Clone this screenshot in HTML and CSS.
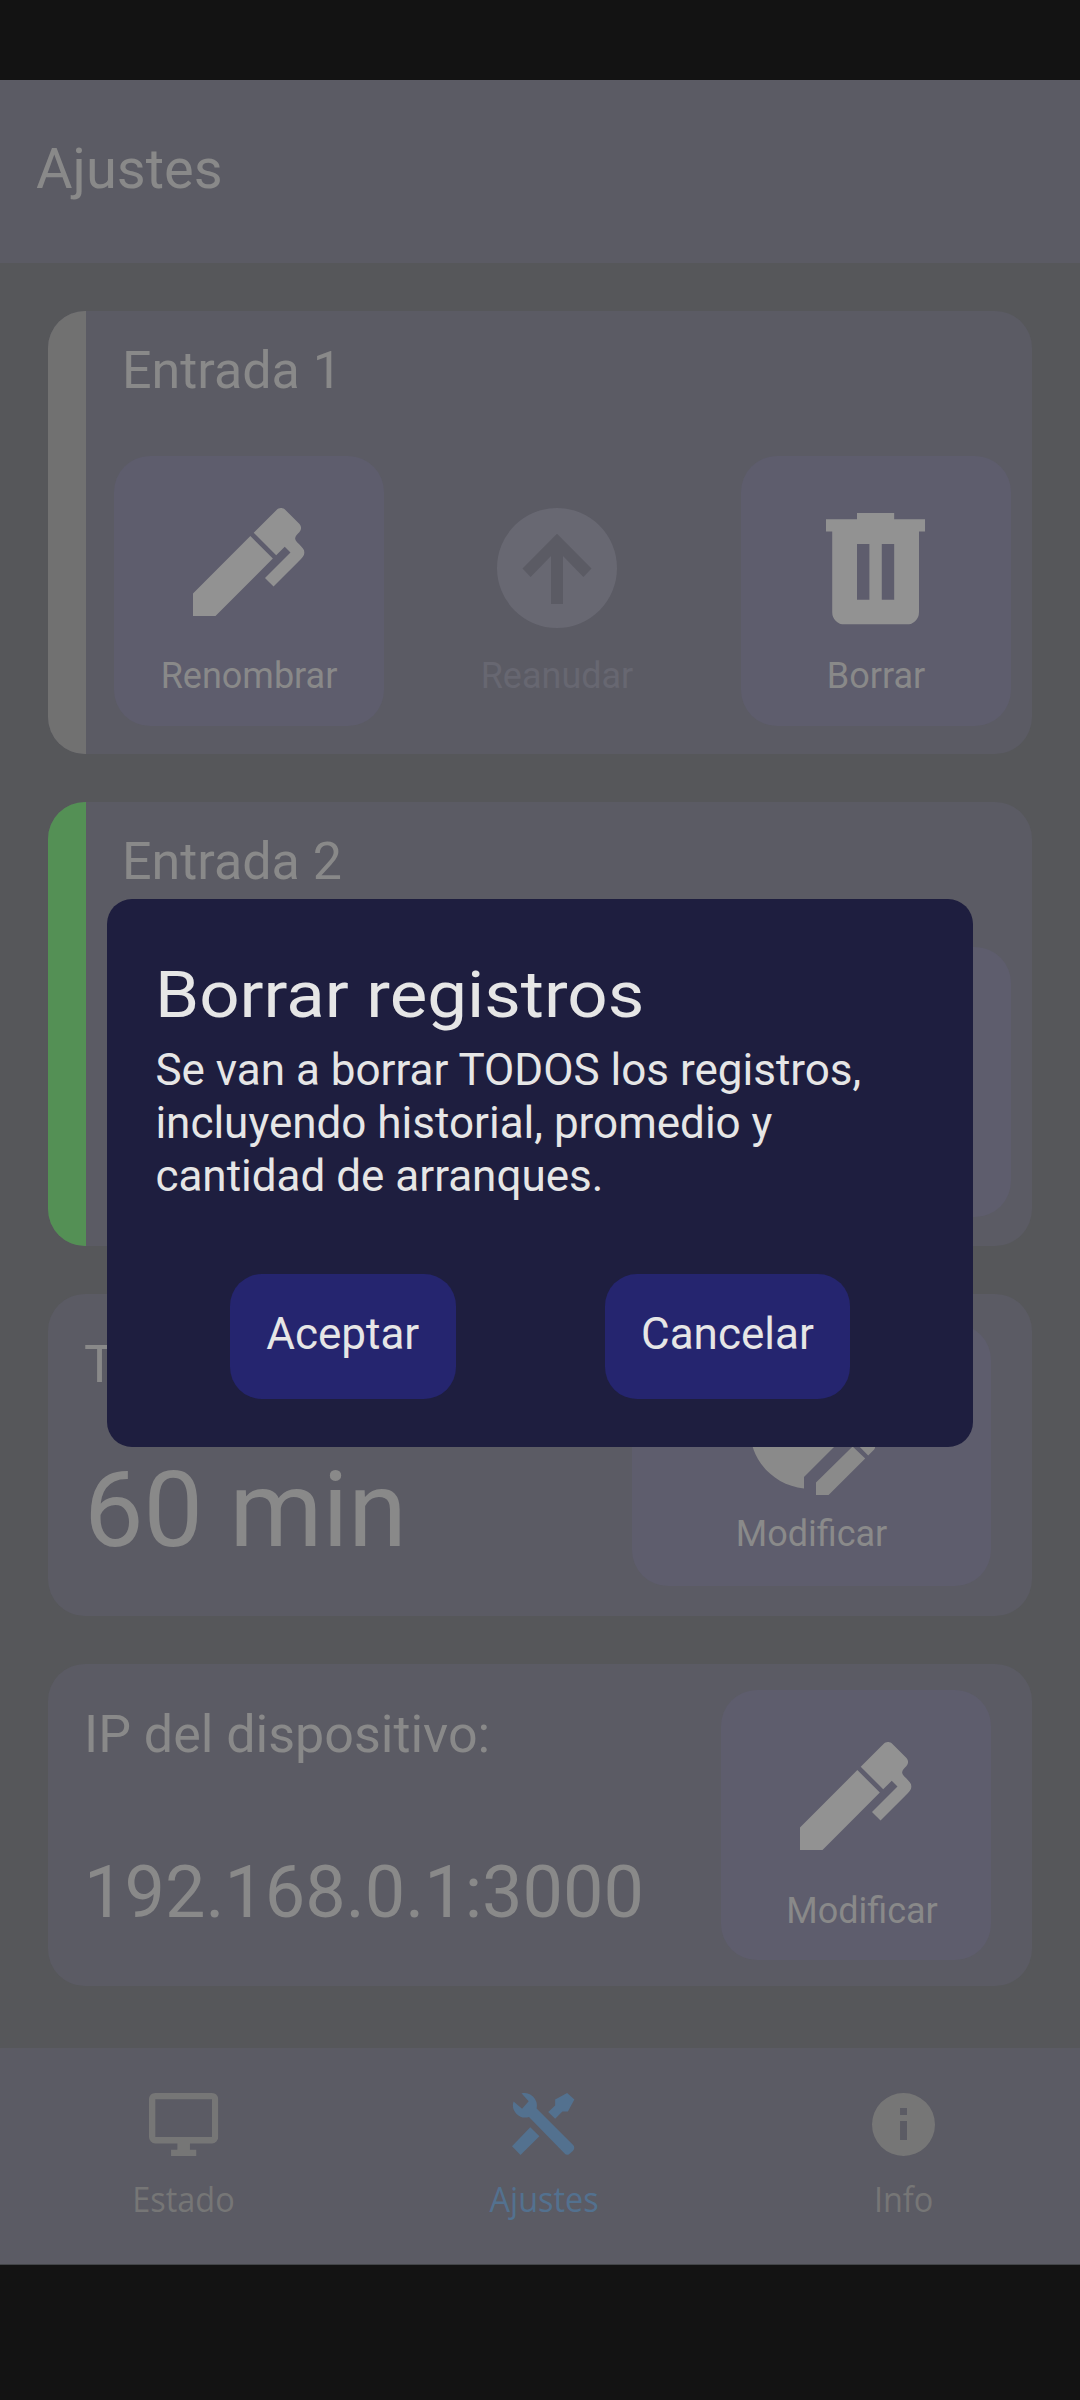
FILE: index.html
```html
<!DOCTYPE html>
<html lang="es">
<head>
<meta charset="utf-8">
<title>Ajustes</title>
<link rel="stylesheet" href="styles.css">
</head>
<body>
<svg class="defs" width="0" height="0">
  <symbol id="pen" viewBox="3 3 18.6 18"><path d="M20.71,7.04C20.37,7.38 20.04,7.71 20.03,8.04C20,8.36 20.34,8.69 20.66,9C21.14,9.5 21.61,9.95 21.59,10.44C21.57,10.93 21.06,11.44 20.55,11.94L16.42,16.08L15,14.66L19.25,10.42L18.29,9.46L16.87,10.87L13.12,7.12L16.96,3.29C17.35,2.9 18,2.9 18.37,3.29L20.71,5.63C21.1,6 21.1,6.65 20.71,7.04M3,17.25L12.56,7.68L16.31,11.43L6.75,21H3V17.25Z"/></symbol>
  <symbol id="arrow-up" viewBox="2 2 20 20"><path d="M13,18V10L16.4,13.5L17.75,12.08L12,6.3L6.25,12.08L7.6,13.5L11,10V18H13M12,2A10,10 0 0,1 22,12A10,10 0 0,1 12,22A10,10 0 0,1 2,12A10,10 0 0,1 12,2Z"/></symbol>
  <symbol id="trash" viewBox="4 3 16 18"><path d="M9,3V4H4V6H5V19A2,2 0 0,0 7,21H17A2,2 0 0,0 19,19V6H20V4H15V3H9M9,8H11V17H9V8M13,8H15V17H13V8Z"/></symbol>
  <symbol id="clock-edit" viewBox="0 0 24 24"><path d="M21 13.1C20.9 13.1 20.7 13.2 20.6 13.3L19.6 14.3L21.7 16.4L22.7 15.4C22.9 15.2 22.9 14.8 22.7 14.6L21.4 13.3C21.3 13.2 21.2 13.1 21 13.1M19.1 14.9L13 20.9V23H15.1L21.2 16.9L19.1 14.9M12.5 7V12.2L16.5 14.5L15.5 15.5L11 13V7H12.5M11 21.9C5.9 21.4 2 17.2 2 12C2 6.5 6.5 2 12 2C17.3 2 21.6 6.1 22 11.3C21.7 11.2 21.4 11.1 21 11.1C20.2 11.1 19.6 11.4 19.2 11.8L11 20V21.9Z"/></symbol>
  <symbol id="monitor" viewBox="1 2 22 20"><path d="M21,16H3V4H21M21,2H3C1.89,2 1,2.89 1,4V16A2,2 0 0,0 3,18H10V20H8V22H16V20H14V18H21A2,2 0 0,0 23,16V4C23,2.89 22.1,2 21,2Z"/></symbol>
  <symbol id="tools" viewBox="2 2 20 20"><path d="M21.3 20.4L20.4 21.2A1.15 1.15 0 0 1 18.7 21.2L7.4 9.6A3.9 3.9 0 0 1 2.5 4.7L5.2 7L7.3 4.6L5 2.1A4 4 0 0 1 9.8 6.9L21.4 18.5A1.3 1.3 0 0 1 21.3 20.4M2 18.9L4.7 21.7L10.7 15.7L7.8 12.9M19.5 2L15.7 4.1V6L13.5 8L15.7 10.2L18 7.9H19.75L21.8 4.1Z"/></symbol>
  <symbol id="info" viewBox="2 2 20 20"><path d="M13.1,9H10.9V6.8H13.1M13.1,16.9H10.9V10.9H13.1M12,2A10,10 0 0,0 2,12A10,10 0 0,0 12,22A10,10 0 0,0 22,12A10,10 0 0,0 12,2Z"/></symbol>
</svg>
<div class="screen">
  <div class="statusbar"></div>
  <header class="header"><h1>Ajustes</h1></header>
  <main class="content">
    <section class="card input-card">
      <div class="stripe"></div>
      <div class="input-body">
        <h2>Entrada 1</h2>
        <div class="actions">
          <div class="action"><div class="icon-box"><svg class="icon-pen"><use href="#pen"/></svg></div><span>Renombrar</span></div>
          <div class="action disabled"><div class="icon-box"><svg class="icon-arrow"><use href="#arrow-up"/></svg></div><span>Reanudar</span></div>
          <div class="action delete"><div class="icon-box"><svg class="icon-trash"><use href="#trash"/></svg></div><span>Borrar</span></div>
        </div>
      </div>
    </section>
    <section class="card input-card active">
      <div class="stripe"></div>
      <div class="input-body">
        <h2>Entrada 2</h2>
        <div class="actions">
          <div class="action"></div>
          <div class="action disabled"></div>
          <div class="action delete"></div>
        </div>
      </div>
    </section>
    <section class="card value-card">
      <div class="value-body">
        <h2>T</h2>
        <p class="minutes">60 min</p>
      </div>
      <div class="action wide"><svg class="icon-clock"><use href="#clock-edit"/></svg><span>Modificar</span></div>
    </section>
    <section class="card value-card">
      <div class="value-body">
        <h2>IP del dispositivo:</h2>
        <p class="address">192.168.0.1:3000</p>
      </div>
      <div class="action address-action"><div class="icon-box"><svg class="icon-pen"><use href="#pen"/></svg></div><span>Modificar</span></div>
    </section>
  </main>
  <nav class="tabs">
    <div class="tab"><svg class="icon-monitor"><use href="#monitor"/></svg><span>Estado</span></div>
    <div class="tab selected"><svg class="icon-tab"><use href="#tools"/></svg><span>Ajustes</span></div>
    <div class="tab"><svg class="icon-tab"><use href="#info"/></svg><span>Info</span></div>
  </nav>
  <div class="navbar"></div>
  <div class="dialog">
    <h3>Borrar registros</h3>
    <p>Se van a borrar TODOS los registros, incluyendo historial, promedio y cantidad de arranques.</p>
    <div class="dialog-buttons">
      <div class="button">Aceptar</div>
      <div class="button">Cancelar</div>
    </div>
  </div>
</div>
</body>
</html>
```
FILE: styles.css
```css
* { box-sizing: border-box; margin: 0; padding: 0; }
body { background: #131313; font-family: Roboto, sans-serif; color: #898989; }
h1, h2, h3 { font-weight: 400; }
svg { display: block; fill: currentColor; }
.defs { position: absolute; }

.screen {
  position: relative;
  display: flex;
  flex-direction: column;
  width: 1080px;
  height: 2400px;
  overflow: hidden;
  background: #56575a;
}
.statusbar { height: 80px; background: #131313; }
.header {
  display: flex;
  align-items: center;
  height: 183px;
  padding: 0 36px 5px;
  background: #5b5b64;
}
.header h1 { font-size: 56px; line-height: 66px; }

.content {
  display: flex;
  flex-direction: column;
  gap: 48px;
  height: 1785px;
  padding: 48px 48px 0;
}
.card {
  display: flex;
  flex: none;
  overflow: hidden;
  border-radius: 37px;
  background: #5b5b64;
}
.card h2 { font-size: 52px; line-height: 60px; }

.input-card { height: 443.3px; }
.stripe { width: 38px; background: #717171; }
.active .stripe { background: #549055; }
.input-body { padding: 30px 0 0 28px; }
.input-body h2 { padding-left: 8px; }
.actions { display: flex; margin-top: 55px; }
.action {
  display: flex;
  flex-direction: column;
  align-items: center;
  width: 270px;
  height: 270px;
  padding-top: 52px;
  border-radius: 36px;
  background: #5e5d6d;
}
.action span { font-size: 36px; line-height: 42px; }
.action.disabled { margin: 0 49px 0 38px; background: none; color: #676771; }
.icon-box { height: 120px; margin-bottom: 27px; color: #929292; }
.disabled .icon-box { color: #686872; }
.icon-pen { width: 111.6px; height: 108px; }
.icon-arrow { width: 120px; height: 120px; }
.icon-trash { width: 99.2px; height: 111.6px; margin-top: 5px; }

.value-card { height: 322.4px; align-items: center; justify-content: space-between; padding: 0 41px 0 36px; }
.value-body { align-self: stretch; padding-top: 41px; }
.minutes { margin-top: 55px; font-size: 106px; line-height: 120px; }
.address { margin-top: 83px; font-size: 72px; line-height: 90px; }
.action.wide { width: 359px; height: 262px; padding-top: 33px; color: #8a8a8a; }
.icon-clock { width: 144px; height: 144px; margin: 0 4px 12px 0; }
.address-action .icon-box { margin-bottom: 28px; }
.address-action span { margin-left: 12px; }

.tabs {
  display: flex;
  height: 216px;
  padding-left: 4px;
  background: #5b5b64;
  color: #767676;
  font-family: "Open Sans", sans-serif;
}
.tab { display: flex; flex: none; flex-direction: column; align-items: center; width: 359.8px; padding-top: 45px; }
.tab span { margin-top: 21px; font-size: 34.5px; line-height: 44px; transform: scaleX(0.94); }
.selected { color: #53718f; }
.icon-monitor { width: 69.3px; height: 63px; }
.icon-tab { width: 63px; height: 63px; }
.navbar { flex: 1; border-top: 1px solid #434548; background: #131313; }

.dialog {
  position: absolute;
  left: 107.4px;
  top: 899px;
  width: 865.3px;
  height: 548px;
  padding: 59px 48px 0;
  border-radius: 25px;
  background: #1e1e3f;
  color: #e6e6e6;
}
.dialog h3 { font-size: 64px; line-height: 76px; transform: scaleX(1.107); transform-origin: left; }
.dialog p { margin-top: 10px; font-size: 44px; line-height: 53px; }
.dialog-buttons { display: flex; justify-content: space-around; margin-top: 71px; }
.button {
  height: 125px;
  padding: 34px 36.5px 0;
  border-radius: 32px;
  background: #25256f;
  font-size: 44px;
  line-height: 52px;
}
```
